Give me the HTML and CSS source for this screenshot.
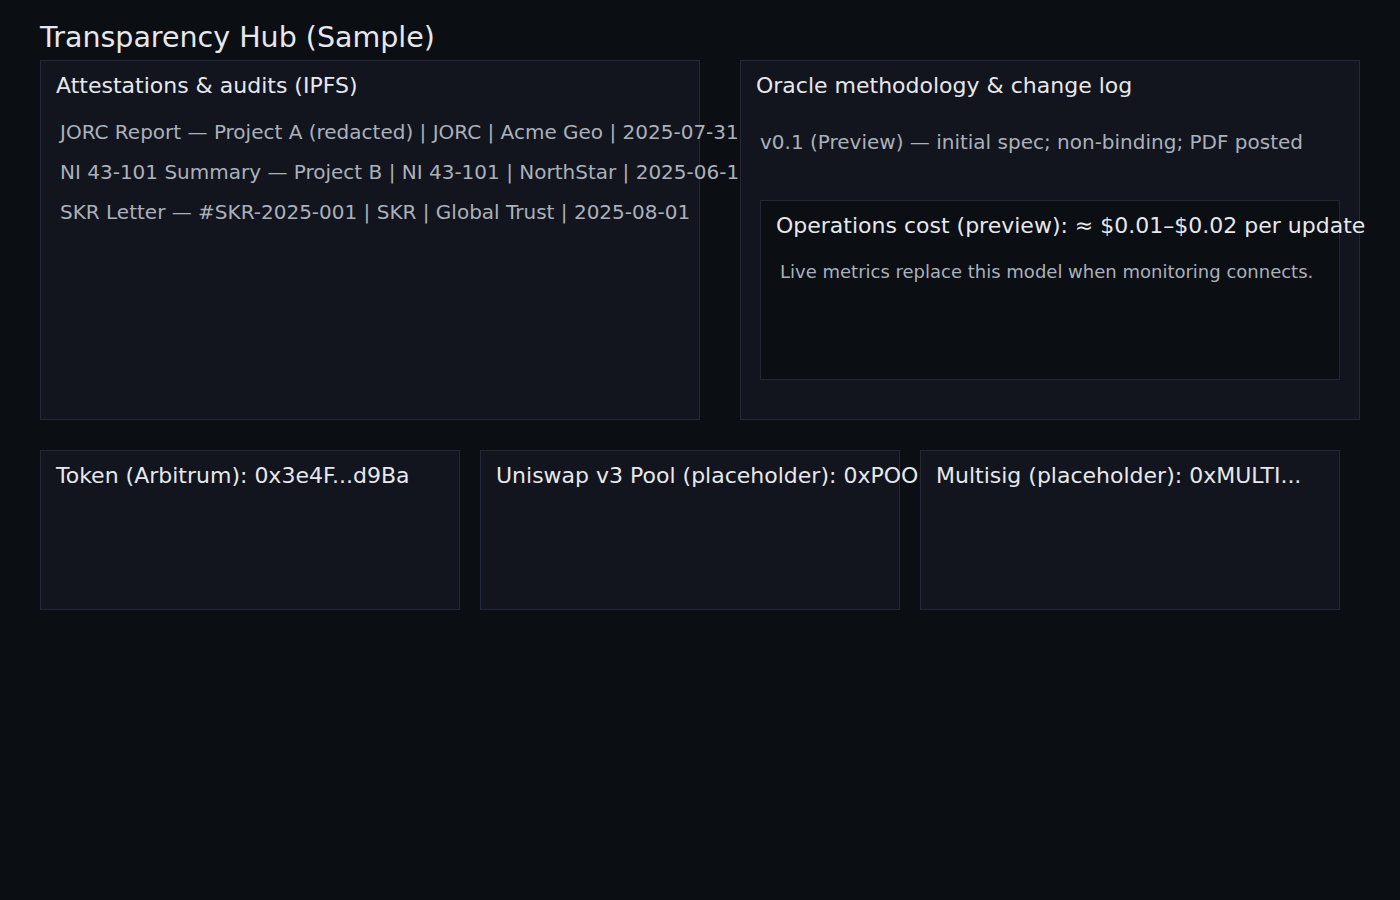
FILE: index.html
```html
<!DOCTYPE html>
<html lang="en">
<head>
<meta charset="utf-8">
<title>Transparency Hub (Sample)</title>
<link rel="stylesheet" href="styles.css">
</head>
<body>
<main class="page">
  <h1 class="title">Transparency Hub (Sample)</h1>
  <section class="top-row">
    <div class="panel panel-audits">
      <h2 class="panel-heading">Attestations &amp; audits (IPFS)</h2>
      <ul class="list">
        <li>JORC Report — Project A (redacted) | JORC | Acme Geo | 2025-07-31</li>
        <li>NI 43-101 Summary — Project B | NI 43-101 | NorthStar | 2025-06-15</li>
        <li>SKR Letter — #SKR-2025-001 | SKR | Global Trust | 2025-08-01</li>
      </ul>
    </div>
    <div class="panel panel-oracle">
      <h2 class="panel-heading">Oracle methodology &amp; change log</h2>
      <ul class="list list-log">
        <li>v0.1 (Preview) — initial spec; non-binding; PDF posted</li>
      </ul>
      <div class="inner-box">
        <h3 class="panel-heading">Operations cost (preview): ≈ $0.01–$0.02 per update</h3>
        <p class="note">Live metrics replace this model when monitoring connects.</p>
      </div>
    </div>
  </section>
  <section class="bottom-row">
    <div class="panel card">
      <h2 class="panel-heading">Token (Arbitrum): 0x3e4F...d9Ba</h2>
    </div>
    <div class="panel card">
      <h2 class="panel-heading">Uniswap v3 Pool (placeholder): 0xPOOL...</h2>
    </div>
    <div class="panel card">
      <h2 class="panel-heading">Multisig (placeholder): 0xMULTI...</h2>
    </div>
  </section>
</main>
</body>
</html>
```

FILE: styles.css
```css
* { box-sizing: border-box; }

html, body {
  margin: 0;
  padding: 0;
  background: #0b0e13;
}

body {
  font-family: "DejaVu Sans", "Liberation Sans", sans-serif;
  color: #e6e8ec;
  min-height: 900px;
}

.page {
  padding: 21px 40px 0;
}

.title {
  margin: 0 0 5px;
  font-size: 28.5px;
  font-weight: normal;
  line-height: 34px;
  color: #e6e8ec;
  white-space: nowrap;
}

.top-row {
  display: grid;
  grid-template-columns: 660px 620px;
  column-gap: 40px;
}

.panel {
  background: #12151d;
  border: 1px solid #232836;
  min-width: 0;
}

.panel-audits,
.panel-oracle {
  height: 360px;
  padding: 12px 15px;
}

.panel-heading {
  margin: 0;
  font-size: 22px;
  font-weight: normal;
  line-height: normal;
  color: #e6e8ec;
  white-space: nowrap;
}

.list {
  list-style: none;
  margin: 14px 0 0;
  padding: 0;
}

.list li {
  padding: 8px 4px;
  font-size: 20px;
  line-height: 24px;
  color: #aab1bb;
  white-space: nowrap;
}

.list-log {
  margin-top: 24px;
}

.inner-box {
  margin: 38px 4px 0;
  height: 180px;
  background: #0b0e13;
  border: 1px solid #232836;
  padding: 12px 15px;
}

.note {
  margin: 23px 4px 0;
  font-size: 18px;
  line-height: normal;
  color: #aab1bb;
  white-space: nowrap;
}

.bottom-row {
  margin-top: 30px;
  display: grid;
  grid-template-columns: repeat(3, 420px);
  column-gap: 20px;
}

.card {
  height: 160px;
  padding: 12px 15px;
}
```
